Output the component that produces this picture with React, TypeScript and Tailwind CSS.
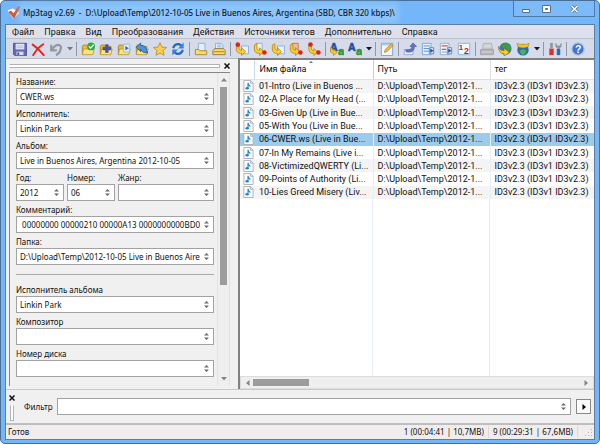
import React, { useState } from 'react';

const menus = [
  'Файл',
  'Правка',
  'Вид',
  'Преобразования',
  'Действия',
  'Источники тегов',
  'Дополнительно',
  'Справка',
];

const files = [
  '01-Intro (Live in Buenos ...',
  '02-A Place for My Head (...',
  '03-Given Up (Live in Bue...',
  '05-With You (Live in Bue...',
  '06-CWER.ws (Live in Bue...',
  '07-In My Remains (Live i...',
  '08-VictimizedQWERTY (Li...',
  '09-Points of Authority (Li...',
  '10-Lies Greed Misery (Liv...',
];

const Icon: React.FC<{ children: React.ReactNode }> = ({ children }) => (
  <svg viewBox="0 0 16 16" className="h-[14px] w-[14px]" fill="none" aria-hidden="true">
    {children}
  </svg>
);

const Folder: React.FC<{ children?: React.ReactNode }> = ({ children }) => (
  <Icon>
    <path d="M1.500 14.500V5l1-1.500h4L8 5h5.500v3.500" fill="#e9bd35" stroke="#a68426" />
    <path d="M1.500 14.500L3 8h12l-1.500 6.500z" fill="#fbe57e" stroke="#b8922a" strokeWidth=".9" />
    {children}
  </Icon>
);

// small page with a gold arrow hooked in front of it
const Hook: React.FC<{ dotX?: number; dotY?: number; flip?: boolean; red?: boolean }> = ({ dotX, dotY, flip, red }) => (
  <Icon>
    <path d={flip ? 'M3.500 1.500h7v9h-7z' : 'M7.500 4.500h8v9h-8z'} fill={red ? '#f3b9a4' : '#e8f1fd'} stroke={red ? '#c96a48' : '#86a8dc'} />
    <path d="M1.500 3.500L4.500 2v6q.5 1.500 3 1.500V6.500l4.500 4.500-4.500 4.500V13Q1.500 13 1.500 8z" fill="#fbd02b" stroke="#b8860f" strokeWidth=".9" />
    {dotX !== undefined && <circle cx={dotX} cy={dotY} r="2.600" fill="#dd2415" />}
  </Icon>
);

const icons: Record<string, React.ReactNode> = {
  save: (
    <Icon>
      <path d="M.5 1.500h15v14H2l-1.500-1.500z" fill="#6466b8" stroke="#4d4f9d" />
      <path d="M3 2h10v6.500H3z" fill="#e4e6f6" />
      <path d="M4 4.500h8M4 6.500h8" stroke="#b5b8dc" />
      <path d="M4 11h8v4H4z" fill="#d8dae8" />
      <path d="M5 12h2v3H5z" fill="#4d4f9d" />
    </Icon>
  ),
  remove: (
    <Icon>
      <path d="M2 3q6 4 12.500 12M14 2.500Q7 7 2.500 15" stroke="#e0251b" strokeWidth="2.200" strokeLinecap="round" />
    </Icon>
  ),
  undo: (
    <Icon>
      <path d="M2.500 3v6.500H9M3 9Q8 2.500 11.500 3.500T13 9q-.5 4-5 6" stroke="#95999f" strokeWidth="2.600" />
    </Icon>
  ),
  dirOk: (
    <Folder>
      <circle cx="11.500" cy="5" r="4.500" fill="#2bad45" />
      <path d="M9 5l2 2 3.500-4" stroke="#fff" strokeWidth="1.500" />
    </Folder>
  ),
  dirAdd: (
    <Folder>
      <path d="M7.500 3h3v3h3v3h-3v3h-3V9h-3V6h3z" fill="#4a56a8" stroke="#343d82" strokeWidth=".6" />
    </Folder>
  ),
  dirPlay: (
    <Folder>
      <path d="M7.500 2.500h7v9h-7z" fill="#dcecfb" stroke="#8badd4" strokeWidth=".8" />
      <path d="M9.500 4.500l4 2.500-4 2.500z" fill="#2b6cc0" />
    </Folder>
  ),
  dirUp: (
    <Folder>
      <path d="M1.500 6L6.500 1v3q6-.5 7 6l1 2.500q-7 0-8-4.500V11z" fill="#4e94dc" stroke="#1d4f99" strokeWidth=".9" />
    </Folder>
  ),
  star: (
    <Icon>
      <path d="M8 .8l2.200 5 5.200.5-4 3.600 1.200 5.300L8 12.500l-4.600 2.700 1.200-5.300-4-3.600 5.200-.5z" fill="#fcd24c" stroke="#c08b25" />
    </Icon>
  ),
  refresh: (
    <Icon>
      <path d="M2.500 7Q4 2 9 2.500l3 1.500M13.500 9q-1.500 5-6.500 4.500L4 12" stroke="#2668bd" strokeWidth="2.600" />
      <path d="M14.500.5v7H8zM1.500 15.500v-7H8z" fill="#3a82d8" />
    </Icon>
  ),
  playlist: (
    <Icon>
      <path d="M5 1.500h7.500v9H5z" fill="#e4effb" stroke="#8aaad2" />
      <path d="M1.500 8.500h4l1 1.500h8v4.500h-13z" fill="#fbdc68" stroke="#a68426" />
    </Icon>
  ),
  playlists: (
    <Icon>
      <path d="M4 8V1.500h6.500L12.500 4v5H4z" fill="#e4effb" stroke="#8aaad2" />
      <path d="M6 3.500h4M6 5.500h5" stroke="#8aaad2" />
      <path d="M1 14.500V10l2-2.500h10l2 2.500v4.500z" fill="#f8d662" stroke="#8d7434" />
      <path d="M2 11h12" stroke="#a68426" />
    </Icon>
  ),
  tagFile: <Hook dotX={3.200} dotY={3} />,
  fileTag: <Hook flip dotX={13} dotY={12} />,
  fileFile: <Hook />,
  textTag: <Hook flip red dotX={13} dotY={12} />,
  tagTag: (
    <Icon>
      <path d="M2 3.500h3V8q0 2 3 2V7.500l4 4-4 4V13q-6 0-6-5z" fill="#fbd02b" stroke="#b8860f" strokeWidth=".9" />
      <circle cx="4" cy="2.800" r="2.600" fill="#dd2415" />
      <circle cx="13" cy="12" r="2.600" fill="#dd2415" />
    </Icon>
  ),
  actionQuick: (
    <Icon>
      <text x="0" y="10" fontSize="12" fontWeight="700" fontFamily="Liberation Sans, sans-serif" fill="#1f4e9e" stroke="#1f4e9e" strokeWidth=".7">A</text>
      <path d="M.5 6v4q.5 3 3.500 3v2.500L8 12 4 8.500V10q-1.500 0-1.500-3z" fill="#fbd02b" stroke="#b8860f" strokeWidth=".8" />
      <text x="9" y="15" fontSize="13" fontWeight="700" fontFamily="Liberation Sans, sans-serif" fill="#2b9a33" stroke="#2b9a33" strokeWidth=".7">a</text>
    </Icon>
  ),
  action: (
    <Icon>
      <text x="0" y="10" fontSize="12" fontWeight="700" fontFamily="Liberation Sans, sans-serif" fill="#1f4e9e" stroke="#1f4e9e" strokeWidth=".7">A</text>
      <text x="9" y="15" fontSize="13" fontWeight="700" fontFamily="Liberation Sans, sans-serif" fill="#2b9a33" stroke="#2b9a33" strokeWidth=".7">a</text>
    </Icon>
  ),
  edit: (
    <Icon>
      <path d="M1.500 1.500h13v14h-13z" fill="#f2f8ff" stroke="#6a9bd8" />
      <path d="M2 2h12v2H2z" fill="#a9cbf0" />
      <path d="M5 12l1-3.500L13 2l2 2-7 6.800z" fill="#f7b62c" stroke="#a87716" strokeWidth=".7" />
    </Icon>
  ),
  undoPage: (
    <Icon>
      <path d="M1.500 8.500h10v6h-10z" fill="#e4ecfa" stroke="#8ea6d2" />
      <path d="M3 9h3q4 0 4.500-4H8l3.500-4 4 4H13q0 6.500-6 6.500H4z" fill="#6474c4" stroke="#3e4b98" strokeWidth=".7" />
    </Icon>
  ),
  listOut: (
    <Icon>
      <path d="M1.500 1.500h10v13h-10z" fill="#e6f2ff" stroke="#6fa0d8" />
      <path d="M3 4.500h7M3 7.500h7M3 10.500h7" stroke="#4a87c9" />
      <path d="M9.500 6.500h5v7h-5z" fill="#dfe9f5" stroke="#5a7fb0" />
      <path d="M10.500 7.500l4 2.500-4 2.500z" fill="#24549c" />
    </Icon>
  ),
  listRed: (
    <Icon>
      <path d="M1.500 1.500h10v13h-10z" fill="#eef4fd" stroke="#8fa9cf" />
      <path d="M3 4.500h7M3 8.500h5" stroke="#d8543c" strokeWidth="1.500" />
      <path d="M3 11.500h6" stroke="#7b9ac6" />
      <path d="M9.500 6.500h5v7h-5z" fill="#dfe9f5" stroke="#5a7fb0" />
      <path d="M10.500 7.500l4 2.500-4 2.500z" fill="#24549c" />
    </Icon>
  ),
  number: (
    <Icon>
      <path d="M1.500 1.500h13v13h-13z" fill="#f4f9ff" stroke="#7fb0e0" />
      <text x="2" y="9" fontSize="9" fontWeight="700" fontFamily="Liberation Sans, sans-serif" fill="#b3261c">1</text>
      <text x="8" y="14" fontSize="10" fontWeight="700" fontFamily="Liberation Sans, sans-serif" fill="#b3261c">2</text>
    </Icon>
  ),
  disc: (
    <Icon>
      <path d="M3 6l1-4.500h9L14 6v2H3z" fill="#d0d1d4" stroke="#b0b1b4" />
      <path d="M.5 8.500h15v6H.5z" fill="#b4b5b8" stroke="#a3a4a8" />
      <path d="M2 11.500h12M5 4.500h7" stroke="#dfdfe2" />
    </Icon>
  ),
  globe: (
    <Icon>
      <circle cx="8.500" cy="7.500" r="7" fill="#2f78c6" />
      <path d="M4 3q5-4 9 0l2 4-2 4-3-2-1-3-4 1z" fill="#3f9c3c" />
      <path d="M.5 5q1 5 6.500 5V7l6 5-6 4v-2.500Q.5 13 .5 5z" fill="#f8d02c" stroke="#98750f" strokeWidth=".8" />
    </Icon>
  ),
  globeMenu: (
    <Icon>
      <circle cx="8" cy="9" r="6.500" fill="#256cba" />
      <path d="M4 10q4-3 8 0l-2 4-3 1-2-3z" fill="#57ac55" />
      <path d="M1 1.500l3 1h8l3-1-1 4q-6 2.500-12 0z" fill="#f0c132" stroke="#a37d18" strokeWidth=".6" />
    </Icon>
  ),
  options: (
    <Icon>
      <path d="M2.500 1h3v6h-3z" fill="#8d959e" />
      <path d="M1.500 7.500h5v7.500h-5z" fill="#dc3227" />
      <path d="M8.500 1v4l2 2v1h3V7l2-2V1L14 2v2h-4V2z" fill="#8d959e" />
      <path d="M10 8h4v7h-4z" fill="#2c6bbf" />
    </Icon>
  ),
  help: (
    <Icon>
      <circle cx="8" cy="8" r="7" fill="#3f74cf" stroke="#a9c0e6" strokeWidth="1.500" />
      <text x="4.500" y="12.500" fontSize="12" fontWeight="700" fontFamily="Liberation Sans, sans-serif" fill="#fff">?</text>
    </Icon>
  ),
};

// '|' is a separator, 'v' a drop-down arrow
const toolbar: [string, string][] = [
  ['save', 'Сохранить'], ['remove', 'Удалить'], ['undo', 'Отменить'], ['v', 'Список отмены'], ['|', ''],
  ['dirOk', 'Сменить папку'], ['dirAdd', 'Добавить папку'], ['dirPlay', 'Папка плейлиста'], ['dirUp', 'Вверх'], ['star', 'Избранное'], ['refresh', 'Обновить'], ['|', ''],
  ['playlist', 'Плейлист'], ['playlists', 'Плейлист всех файлов'], ['|', ''],
  ['tagFile', 'Тег - Имя файла'], ['fileTag', 'Имя файла - Тег'], ['fileFile', 'Имя файла - Имя файла'], ['textTag', 'Текст - Тег'], ['tagTag', 'Тег - Тег'], ['|', ''],
  ['actionQuick', 'Быстрые действия'], ['action', 'Действия'], ['v', 'Список действий'], ['|', ''],
  ['edit', 'Расширенные теги'], ['|', ''],
  ['undoPage', 'Экспорт'], ['listOut', 'Выделить все'], ['listRed', 'Снять выделение'], ['number', 'Мастер нумерации'], ['|', ''],
  ['disc', 'Диск'], ['globe', 'Freedb'], ['globeMenu', 'Веб-источники'], ['v', 'Список источников'], ['|', ''],
  ['options', 'Настройки'], ['|', ''],
  ['help', 'Помощь'],
];

const Spin: React.FC<{ label: string }> = ({ label }) => (
  <button type="button" aria-label={label} className="flex w-3 shrink-0 items-center justify-center">
    <svg viewBox="0 0 5 7" className="h-[7px] w-[5px]" fill="#6b6b6b" aria-hidden="true">
      <path d="M0 2.500L2.500 0 5 2.500zM0 4.500h5L2.500 7z" />
    </svg>
  </button>
);

const Field: React.FC<{ id: string; label: string; value?: string; className?: string }> = ({ id, label, value = '', className = '' }) => {
  const [text, setText] = useState(value);
  return (
    <div className={`min-w-0 ${className}`}>
      <label htmlFor={id} className="block pt-[3px] text-[8px] leading-3 whitespace-nowrap">{label}</label>
      <div className="flex h-[17px] border border-[#a2a2a2] bg-white pr-px">
        <input
          id={id}
          value={text}
          onChange={e => setText(e.target.value)}
          className="min-w-0 flex-1 bg-transparent pl-[3px] text-[8px] leading-3 outline-none"
        />
        <Spin label={`Список: ${label}`} />
      </div>
    </div>
  );
};

const NoteFile = () => (
  <svg viewBox="0 0 11 13" className="block h-3 w-[11px]" fill="none" aria-hidden="true">
    <path d="M.5.5h7l3 3v9H.5z" fill="#fdfdfd" stroke="#a9aeb5" />
    <path d="M7.500.5v3h3" stroke="#a9aeb5" />
    <path d="M5 3v5.500" stroke="#1682cf" strokeWidth="1.200" />
    <path d="M5 3q.5 1.500 2.500 3 .5 1-.5 2Q7 6 5 6z" fill="#1682cf" />
    <ellipse cx="4" cy="9" rx="1.800" ry="1.400" fill="#1682cf" />
  </svg>
);

const Arrow: React.FC<{ d: string; color?: string }> = ({ d, color = '#858585' }) => (
  <svg viewBox="0 0 6 6" className="h-[6px] w-[6px]" fill={color} aria-hidden="true">
    <path d={d} />
  </svg>
);

const Cross = () => (
  <svg viewBox="0 0 6 6" className="h-[6px] w-[6px]" stroke="#111" strokeWidth="1.500" aria-hidden="true">
    <path d="M.5.5l5 5M5.500.5l-5 5" />
  </svg>
);

const TitleBar = () => (
  <header className="flex h-[23px] shrink-0 items-start justify-between">
    <div className="flex h-[23px] items-center gap-[2px] pl-[2px]">
      <svg viewBox="0 0 14 14" className="h-[14px] w-[14px]" aria-hidden="true">
        <path d="M0 4l6-2 7 5-7 6z" fill="#f8f8fa" stroke="#9ba1b2" strokeWidth=".7" />
        <path d="M2 6l2-1 2.500 3L12 0l1 1-6 11z" fill="#e8501e" stroke="#a83712" strokeWidth=".5" />
      </svg>
      <h1 className="bg-[#8dc4fa] text-[8px] leading-3 font-medium whitespace-pre text-[#10202f] shadow-[0_0_5px_4px_#8dc4fa]">
        {'Mp3tag v2.69  -  D:\\Upload\\Temp\\2012-10-05 Live in Buenos Aires, Argentina (SBD, CBR 320 kbps)\\'}
      </h1>
    </div>
    <div className="flex h-4 w-[82px] border border-t-0 border-[#4d7ba9] bg-[#7dbafa]">
      <button type="button" aria-label="Свернуть" className="flex flex-1 items-center justify-center">
        <svg viewBox="0 0 8 4" className="mt-1 h-1 w-2" aria-hidden="true"><path d="M.5.5h7v3h-7z" fill="#fff" stroke="#56718f" /></svg>
      </button>
      <button type="button" aria-label="Развернуть" className="flex w-4 items-center justify-center">
        <svg viewBox="0 0 9 8" className="h-2 w-[9px]" aria-hidden="true">
          <path d="M.5.5h8v7h-8z" fill="#fff" stroke="#56718f" />
          <path d="M3.500 3.500h2v1h-2z" fill="#7dbafa" stroke="#56718f" />
        </svg>
      </button>
      <button type="button" aria-label="Закрыть" className="flex w-10 items-center justify-center">
        <svg viewBox="0 0 9 8" className="h-2 w-[9px]" fill="none" aria-hidden="true">
          <path d="M1.500 1l6 6M7.500 1l-6 6" stroke="#56718f" strokeWidth="3" />
          <path d="M1.500 1l6 6M7.500 1l-6 6" stroke="#fff" strokeWidth="1.500" />
        </svg>
      </button>
    </div>
  </header>
);

const Toolbar = () => (
  <div role="toolbar" className="flex h-[19px] shrink-0 items-end bg-[#d6dbea] pl-[5px]">
    {toolbar.map(([name, label], i) => {
      if (name === '|') return <div key={i} className="mx-[2px] mb-[2px] h-[14px] w-px shrink-0 bg-[#9197a6]" />;
      if (name === 'v') {
        return (
          <button key={i} type="button" aria-label={label} className="flex h-[18px] w-[9px] shrink-0 items-center justify-center">
            <Arrow d="M0 1h6L3 4.500z" color={i === 3 ? '#77797f' : '#15171c'} />
          </button>
        );
      }
      return (
        <button key={i} type="button" aria-label={label} className="flex h-[18px] w-[18px] shrink-0 items-center justify-center">
          {icons[name]}
        </button>
      );
    })}
  </div>
);

const TagPanel = () => (
  <aside className="flex w-[232px] shrink-0 flex-col border-t border-[#b9bbc4] bg-[#f0f0f0] pr-2 pb-[3px] pl-[3px]">
    <div className="flex h-[13px] shrink-0 items-center gap-[3px]">
      <div className="h-[4px] flex-1 border border-[#b2b2b2] border-l-transparent bg-white" />
      <button type="button" aria-label="Закрыть панель" className="flex w-[7px] justify-center"><Cross /></button>
    </div>
    <div className="flex min-h-0 flex-1 border-t border-l border-[#858585]">
      <div className="min-w-0 flex-1 overflow-hidden pr-[3px] pl-[6px]">
        <Field id="title" label="Название:" value="CWER.ws" />
        <Field id="artist" label="Исполнитель:" value="Linkin Park" />
        <Field id="album" label="Альбом:" value="Live in Buenos Aires, Argentina 2012-10-05" />
        <div className="flex gap-[3px]">
          <Field id="year" label="Год:" value="2012" className="w-12" />
          <Field id="track" label="Номер:" value="06" className="w-12" />
          <Field id="genre" label="Жанр:" className="flex-1" />
        </div>
        <Field id="comment" label="Комментарий:" value=" 00000000 00000210 00000A13 0000000000BD07EC" />
        <Field id="folder" label="Папка:" value="D:\Upload\Temp\2012-10-05 Live in Buenos Aires, Argentina" />
        <hr className="mt-[9px] mb-[6px] border-[#aaaaaa]" />
        <Field id="albumartist" label="Исполнитель альбома" value="Linkin Park" />
        <Field id="composer" label="Композитор" />
        <Field id="disc" label="Номер диска" />
      </div>
      <div className="flex w-[13px] shrink-0 flex-col items-center border-x border-[#e3e3e3] bg-[#efefef]">
        <div className="flex h-[14px] items-center"><Arrow d="M0 4.500h6L3 1z" /></div>
        <div className="h-[198px] w-[7px] bg-[#9c9c9c]" />
        <div className="mt-auto flex h-[14px] items-center"><Arrow d="M0 1h6L3 4.500z" /></div>
      </div>
    </div>
  </aside>
);

const FileList = () => {
  const [selected, setSelected] = useState(4);
  return (
    <main className="flex min-w-0 flex-1 flex-col border-t-2 border-l-2 border-[#808080] bg-white font-[Roboto,sans-serif]">
      <div className="flex min-h-0 flex-1 flex-col bg-white">
        <table className="h-[139px] w-full table-fixed border-collapse text-[9px] leading-3">
          <colgroup>
            <col className="w-[14px]" />
            <col className="w-[119px]" />
            <col className="w-[117px]" />
            <col />
          </colgroup>
          <thead>
            <tr className="h-[19px] text-left">
              <th className="border-r border-b border-[#c5dced] border-b-[#e2e2e2]" />
              <th className="relative border-r border-b border-[#b5d3e8] border-b-[#e2e2e2] p-0 pl-[5px] font-normal">
                Имя файла
                <span className="absolute top-0 left-[53px]"><Arrow d="M1 3h4L3 1z" color="#66717a" /></span>
              </th>
              <th className="border-r border-b border-[#dedede] p-0 pl-[4px] font-normal">Путь</th>
              <th className="border-b border-[#e2e2e2] p-0 pl-[4px] font-normal">тег</th>
            </tr>
          </thead>
          <tbody>
            {files.map((name, i) => (
              <tr
                key={name}
                onClick={() => setSelected(i)}
                className={i === selected ? 'bg-[#9ccbec]' : i % 2 ? 'bg-white' : 'bg-[#f4f4f4]'}
              >
                <td className="overflow-visible p-0 pl-[3px]"><NoteFile /></td>
                <td className="border-r border-[#e6eef5] p-0 pl-[5px] whitespace-nowrap">{name}</td>
                <td className="border-r border-[#e6eef5] p-0 pl-[4px] whitespace-nowrap">D:\Upload\Temp\2012-1...</td>
                <td className="p-0 pl-[4px] whitespace-nowrap">ID3v2.3 (ID3v1 ID3v2.3)</td>
              </tr>
            ))}
          </tbody>
        </table>
        <div className="flex flex-1">
          <div className="w-[133px] border-r border-[#e6eef5]" />
          <div className="w-[117px] border-r border-[#e6eef5]" />
        </div>
      </div>
      <div className="flex h-[13px] shrink-0 items-center border border-[#dcdcdc] bg-[#efefef] px-1">
        <Arrow d="M4.500 0v6L1 3z" />
        <div className="ml-[2px] h-[7px] w-14 bg-[#9c9c9c]" />
        <div className="ml-auto"><Arrow d="M1.500 0v6L5 3z" /></div>
      </div>
    </main>
  );
};

const FilterBar = () => {
  const [filter, setFilter] = useState('');
  return (
    <div className="flex h-[34px] shrink-0 border-t border-[#c9c9c9] bg-[#f0f0f0] pr-[3px] pl-[3px]">
      <div className="flex w-[6px] flex-col items-center gap-1 pt-[5px]">
        <button type="button" aria-label="Закрыть фильтр"><Cross /></button>
        <div className="h-4 w-[4px] border border-t-transparent border-[#b2b2b2] bg-white" />
      </div>
      <label htmlFor="filter" className="w-[42px] self-center pl-[9px] text-[8px] leading-3">Фильтр</label>
      <div className="mt-2 flex h-[17px] flex-1 border border-[#a2a2a2] bg-white pr-px">
        <input
          id="filter"
          value={filter}
          onChange={e => setFilter(e.target.value)}
          className="min-w-0 flex-1 bg-transparent pl-[3px] text-[8px] outline-none"
        />
        <Spin label="История фильтра" />
      </div>
      <button type="button" aria-label="Применить" className="mt-[9px] ml-[5px] flex h-[15px] w-[15px] items-center justify-center border border-[#888] bg-[#fafafa]">
        <Arrow d="M1.500 0v6L5 3z" color="#000" />
      </button>
    </div>
  );
};

export default function App() {
  return (
    <div className="h-screen bg-white pb-px font-['Noto_Sans',sans-serif] text-[#111]">
      <div className="flex h-full flex-col rounded-[5px] border border-[#4a6f96] bg-[#73b6fa] px-[4px] pb-[3px]">
        <TitleBar />
        <div className="flex min-h-0 flex-1 flex-col border border-[#5d7f9f] bg-[#f0f0f0]">
          <nav className="flex h-[14px] shrink-0 items-center gap-[10px] border-b border-[#bcc0cc] bg-[#dde1ee] pl-[6px] font-[Roboto,sans-serif] text-[9px] leading-3">
            {menus.map(m => (
              <button key={m} type="button" className="whitespace-nowrap">{m}</button>
            ))}
          </nav>
          <Toolbar />
          <div className="flex min-h-0 flex-1">
            <TagPanel />
            <FileList />
          </div>
          <FilterBar />
          <footer className="flex h-[16px] shrink-0 items-center border-t-2 border-[#bdbdbd] bg-[#f1eded] text-[8px] leading-3">
            <span className="flex-1 pl-[2px]">Готов</span>
            <span className="border-r border-[#dcd8d8] pr-1">1 (00:04:41 | 10,7MB)</span>
            <span className="border-r border-[#dcd8d8] px-1">9 (00:29:31 | 67,6MB)</span>
            <svg viewBox="0 0 14 12" className="ml-[2px] h-3 w-[14px]" fill="#b8b4b4" aria-hidden="true">
              <path d="M11 3h1v1h-1zM11 6h1v1h-1zM8 6h1v1H8zM11 9h1v1h-1zM8 9h1v1H8zM5 9h1v1H5z" />
            </svg>
          </footer>
        </div>
      </div>
    </div>
  );
}
